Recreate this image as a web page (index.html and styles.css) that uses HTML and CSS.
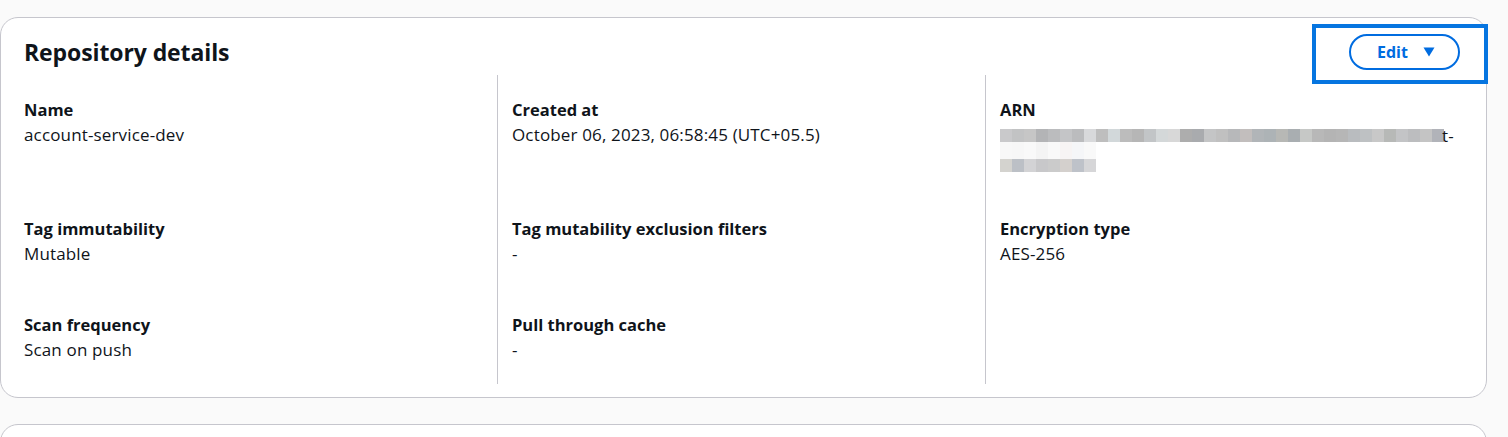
FILE: index.html
```html
<!DOCTYPE html>
<html lang="en">
<head>
<meta charset="utf-8">
<title>Repository details</title>
<link rel="stylesheet" href="styles.css">
</head>
<body>
<div class="page">
  <section class="card">
    <header class="card-header">
      <h2 class="card-title">Repository details</h2>
      <div class="header-actions">
        <button class="btn-edit" type="button">
          <span class="btn-label">Edit</span>
          <svg class="caret" width="12" height="10" viewBox="0 0 12 10" aria-hidden="true"><path d="M0.5 0.5 H11.5 L6 9.5 Z" fill="currentColor"/></svg>
        </button>
      </div>
    </header>
    <div class="kv-grid">
      <div class="kv first-row">
        <div class="kv-label">Name</div>
        <div class="kv-value">account-service-dev</div>
      </div>
      <div class="kv first-row divided">
        <div class="kv-label">Created at</div>
        <div class="kv-value">October 06, 2023, 06:58:45 (UTC+05.5)</div>
      </div>
      <div class="kv first-row divided">
        <div class="kv-label">ARN</div>
        <div class="kv-value arn">
          <div class="arn-line"><span class="blur blur-a"></span><span class="arn-tail">t-</span></div>
          <div class="blur blur-b"></div>
          <div class="blur blur-c"></div>
        </div>
      </div>

      <div class="kv">
        <div class="kv-label">Tag immutability</div>
        <div class="kv-value">Mutable</div>
      </div>
      <div class="kv divided">
        <div class="kv-label">Tag mutability exclusion filters</div>
        <div class="kv-value">-</div>
      </div>
      <div class="kv divided">
        <div class="kv-label">Encryption type</div>
        <div class="kv-value">AES-256</div>
      </div>

      <div class="kv last-row">
        <div class="kv-label">Scan frequency</div>
        <div class="kv-value">Scan on push</div>
      </div>
      <div class="kv last-row divided">
        <div class="kv-label">Pull through cache</div>
        <div class="kv-value">-</div>
      </div>
      <div class="kv last-row divided"></div>
    </div>
  </section>
  <section class="card card-next"></section>
</div>
</body>
</html>
```

FILE: styles.css
```css
* { box-sizing: border-box; }

html, body {
  margin: 0;
  padding: 0;
  background: #fafafa;
}

body {
  font-family: "Open Sans", "Noto Sans", Arial, sans-serif;
  color: #0f141a;
  font-size: 16px;
  line-height: 23px;
  overflow: hidden;
}

.page {
  padding: 17px 21px 0 0;
  display: flex;
  flex-direction: column;
  gap: 26px;
}

.card {
  background: #ffffff;
  border: 1px solid #c6c6cd;
  border-radius: 18px;
  width: 1487px;
}

.card-header {
  display: flex;
  align-items: center;
  justify-content: space-between;
  padding: 17px 26px 0 23px;
  height: 52px;
}

.card-title {
  margin: -2px 0 0 0;
  font-size: 23px;
  line-height: 28px;
  font-weight: 700;
  letter-spacing: -0.1px;
}

.header-actions {
  position: relative;
  display: flex;
}

.header-actions::after {
  content: "";
  position: absolute;
  top: -11px;
  bottom: -14px;
  left: -37px;
  right: -28px;
  border: 4px solid #0675e0;
  pointer-events: none;
}

.btn-edit {
  display: flex;
  align-items: center;
  height: 36px;
  width: 111px;
  margin-top: -1px;
  padding: 0 0 0 26px;
  border: 2px solid #006ce0;
  border-radius: 20px;
  background: #ffffff;
  color: #006ce0;
  font-family: inherit;
  font-size: 16px;
  font-weight: 700;
  line-height: 20px;
}

.caret {
  margin-left: 15px;
  display: block;
}

.kv-grid {
  display: grid;
  grid-template-columns: 488px 488px 488px;
  margin: 5px 0 13px 8px;
}

.kv {
  padding: 0 15px 48px 15px;
}

.kv.divided {
  border-left: 1px solid #c6c6cd;
  padding-left: 14px;
}

.kv.first-row { padding-top: 23px; }
.kv.last-row { padding-bottom: 23px; }

.kv-label {
  font-size: 16.5px;
  font-weight: 700;
  margin-bottom: 2px;
}

.kv-value {
  font-size: 17px;
  letter-spacing: 0.15px;
  font-weight: 400;
}

.arn {
  height: 46px;
  padding-top: 6px;
}

.arn-line {
  display: flex;
  align-items: center;
  height: 13px;
}

.arn-tail {
  line-height: 13px;
  margin-left: -2px;
}

.blur { display: block; height: 13px; }

.blur-a {
  width: 444px;
  background: linear-gradient(to right,
    #c9c9cb 0 12px, #c2c3c4 12px 24px, #c6c6c6 24px 36px, #b3b4b6 36px 48px,
    #bbbcbe 48px 60px, #c4c5c7 60px 72px, #bbbcbe 72px 84px, #d8d9db 84px 96px,
    #bebebe 96px 108px, #d2d8da 108px 120px, #bcbcbc 120px 132px, #b6b6b6 132px 144px,
    #c2c5c7 144px 156px, #d4d8d9 156px 168px, #d8d8d8 168px 180px, #adadad 180px 192px,
    #a9abae 192px 204px, #c4c5c6 204px 216px, #c0c0c0 216px 228px, #b7b8ba 228px 240px,
    #c2bebd 240px 252px, #b1b5b8 252px 264px, #adb3b6 264px 276px, #b7b8b5 276px 288px,
    #a9aeb1 288px 300px, #c6c8c6 300px 312px, #b8b8b8 312px 324px, #b4b4b4 324px 336px,
    #b6b6b6 336px 348px, #b9bcbf 348px 360px, #bec1c3 360px 372px, #c8c8c8 372px 384px,
    #b7b9b7 384px 396px, #c3c4c6 396px 408px, #bcbdbf 408px 420px, #c4c4c4 420px 432px,
    #b1b3b9 432px 444px);
}

.blur-b {
  width: 312px;
  height: 17px;
  background: linear-gradient(to right,
    #f8f8f8 0 12px, #f7f7f7 12px 24px, #f9f9f9 24px 36px, #f4f4f4 36px 48px,
    #f9f9f9 48px 60px, #f7f4f4 60px 72px, #f5f6f8 72px 84px, #f9f9f9 84px 96px,
    #ffffff 96px 312px);
}

.blur-c {
  width: 96px;
  background: linear-gradient(to right,
    #d4d3cf 0 12px, #bcc0c6 12px 24px, #d3d3d5 24px 36px, #c8c8ca 36px 48px,
    #cbcbcb 48px 60px, #d4d0cd 60px 72px, #bec2c9 72px 84px, #d6d6d8 84px 96px);
}

.card-next {
  height: 40px;
}
```
